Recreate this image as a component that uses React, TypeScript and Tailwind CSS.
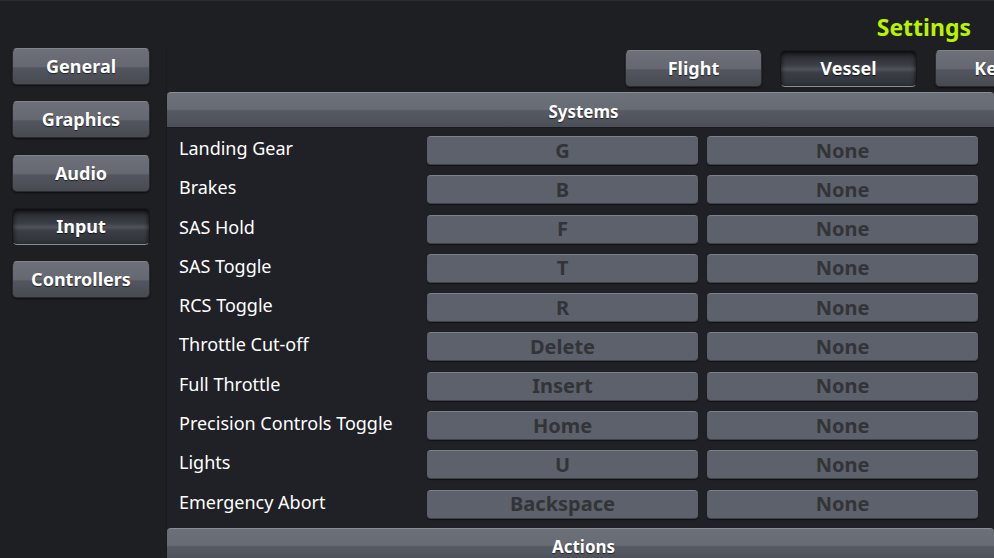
import React from "react";

const navItems = [
  { label: "General", active: false },
  { label: "Graphics", active: false },
  { label: "Audio", active: false },
  { label: "Input", active: true },
  { label: "Controllers", active: false },
];

const rows = [
  ["Landing Gear", "G"],
  ["Brakes", "B"],
  ["SAS Hold", "F"],
  ["SAS Toggle", "T"],
  ["RCS Toggle", "R"],
  ["Throttle Cut-off", "Delete"],
  ["Full Throttle", "Insert"],
  ["Precision Controls Toggle", "Home"],
  ["Lights", "U"],
  ["Emergency Abort", "Backspace"],
];

function Btn({ label, active, w }: { label: string; active: boolean; w: string }) {
  return active ? (
    <div
      className={`${w} h-[37px] shrink-0 rounded-[5px] flex items-center justify-center text-[18px] font-bold text-white border border-[#17181b] border-b-[#8a8d93] bg-[linear-gradient(to_bottom,#25272c_0%,#3a3d44_40%,#50535a_52%,#3b3e45_62%,#2f3238_100%)] shadow-[inset_0_2px_5px_rgba(0,0,0,0.85)] [text-shadow:0_1px_1px_rgba(0,0,0,0.7)]`}
    >
      {label}
    </div>
  ) : (
    <div
      className={`${w} h-[37px] shrink-0 rounded-[5px] flex items-center justify-center text-[18px] font-bold text-white border border-[#2a2b30] border-t-[#80838a] bg-[linear-gradient(to_bottom,#6d7078_0%,#656870_50%,#53565e_54%,#474a51_100%)] shadow-[0_1px_2px_rgba(0,0,0,0.6)] [text-shadow:0_1px_1px_rgba(0,0,0,0.6)]`}
    >
      {label}
    </div>
  );
}

function Header({ title }: { title: string }) {
  return (
    <div className="h-[36px] shrink-0 rounded-t-[4px] flex items-center justify-center pl-[6px] pt-[3px] text-[17px] font-bold text-white border-t border-[#8a8d93] border-b border-b-[#1a1b1e] bg-[linear-gradient(to_bottom,#6c7078_0%,#676b73_48%,#565a62_52%,#4b4e56_100%)] [text-shadow:0_1px_1px_rgba(0,0,0,0.6)]">
      {title}
    </div>
  );
}

function Key({ text }: { text: string }) {
  return (
    <div className="w-[271px] h-[29px] shrink-0 rounded-[4px] flex items-center justify-center text-[20px] font-bold text-[#333438] bg-[#5c616b] border-t border-[#7d8189] border-b border-b-[#3f4249] shadow-[0_1px_1px_rgba(0,0,0,0.5)]">
      {text}
    </div>
  );
}

export default function App() {
  return (
    <div
      className="w-[994px] h-[558px] overflow-hidden bg-[#1e1f23] flex flex-col border-t border-[#2c2d31]"
      style={{ fontFamily: '"Noto Sans", "Open Sans", sans-serif' }}
    >
      <div className="h-[47px] shrink-0 flex items-center justify-end pr-[23px] pt-[6px]">
        <span className="text-[23px] font-bold text-[#b8f300]">Settings</span>
      </div>
      <div className="flex flex-1 min-h-0">
        <div className="w-[167px] shrink-0 pl-[12px] flex flex-col gap-[16.3px] border-r border-[#1a1b1e]">
          {navItems.map((n) => (
            <Btn key={n.label} label={n.label} active={n.active} w="w-[138px]" />
          ))}
        </div>
        <div className="flex-1 min-w-0 flex flex-col">
          <div className="h-[44px] shrink-0 flex items-start gap-[18px] pl-[458px] pt-[2px] overflow-hidden">
            <Btn label="Flight" active={false} w="w-[137px]" />
            <Btn label="Vessel" active={true} w="w-[137px]" />
            <Btn label="Kerbal" active={false} w="w-[137px]" />
          </div>
          <Header title="Systems" />
          <div className="bg-[#202126] flex flex-col gap-[10.3px] pt-[8px] pb-[9px]">
            {rows.map(([label, key]) => (
              <div key={label} className="flex items-center h-[29px]">
                <div className="w-[260px] shrink-0 pl-[12px] text-[18px] text-white -mt-[4px] whitespace-nowrap">{label}</div>
                <Key text={key} />
                <div className="w-[9px] shrink-0" />
                <Key text="None" />
              </div>
            ))}
          </div>
          <Header title="Actions" />
        </div>
      </div>
    </div>
  );
}
